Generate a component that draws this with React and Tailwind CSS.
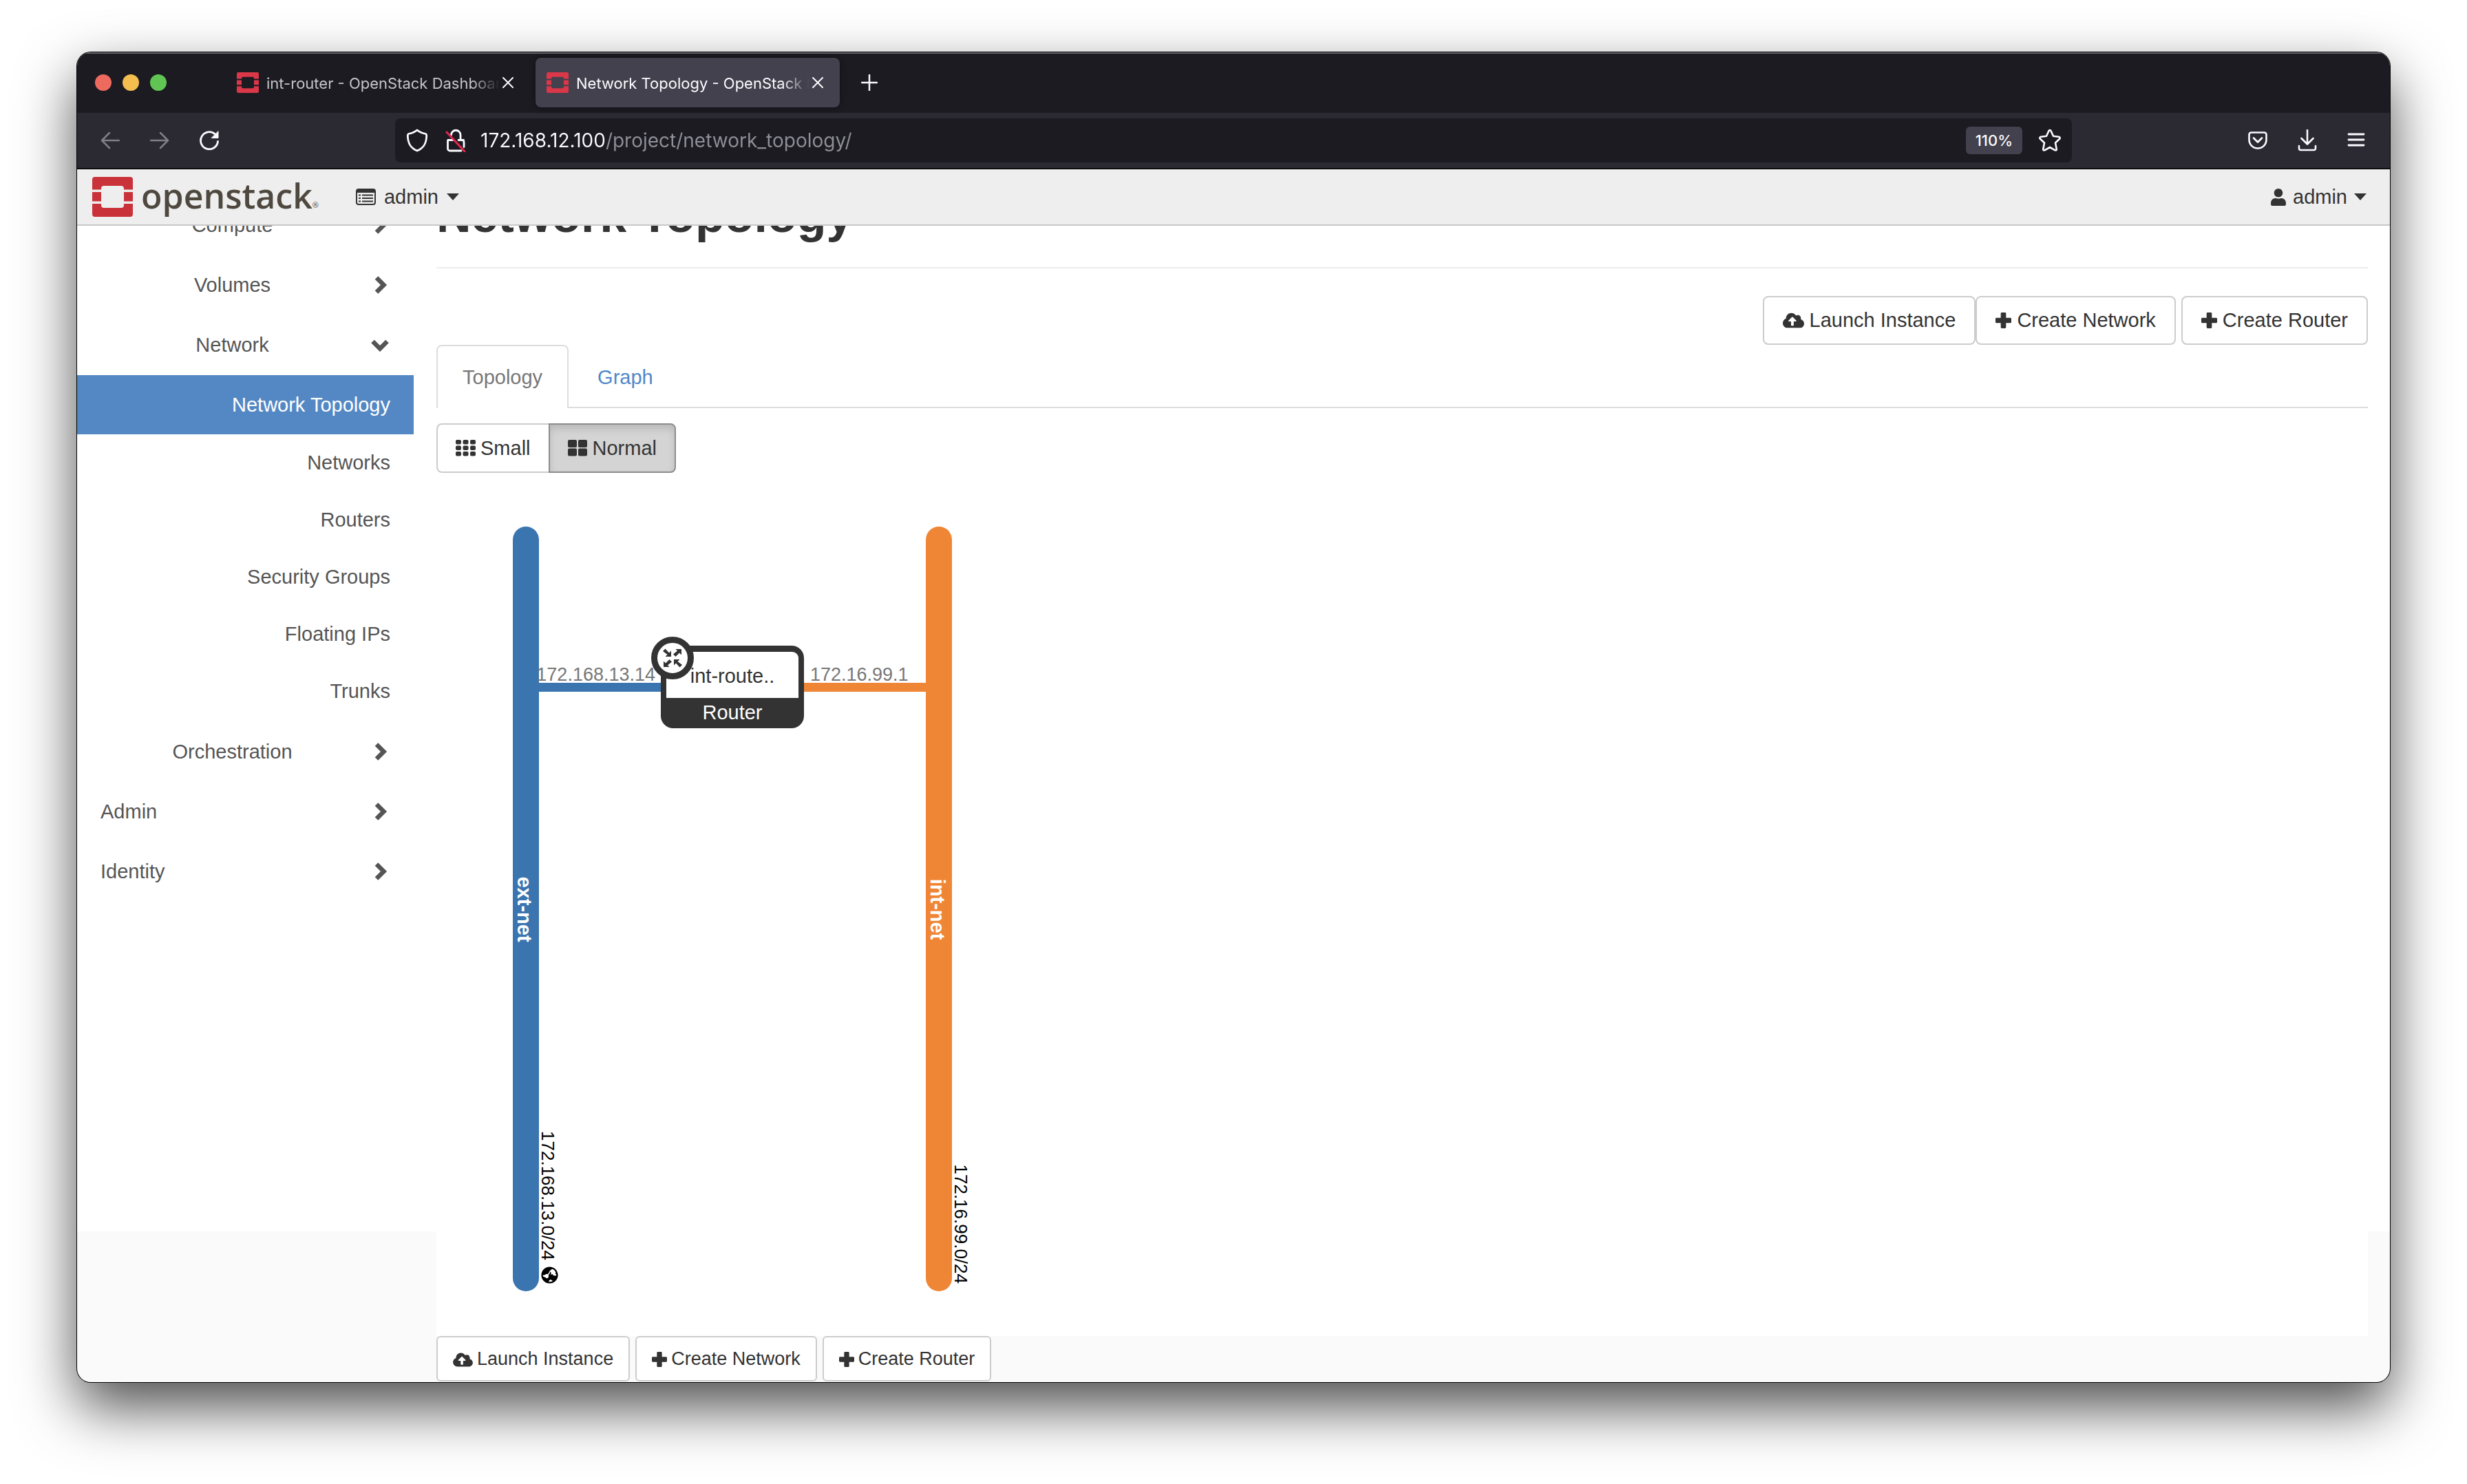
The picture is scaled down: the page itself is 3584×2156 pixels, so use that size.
import { FaCloudUploadAlt, FaUser, FaGlobeAmericas } from "react-icons/fa";

const StackMark = ({ className }) => (
  <svg viewBox="0 0 59 58" preserveAspectRatio="none" fill="currentColor" className={className} aria-hidden="true">
    <path d="M4 0h51a4 4 0 0 1 4 4v14.500H46V17a4 4 0 0 0-4-4H17a4 4 0 0 0-4 4v1.500H0V4a4 4 0 0 1 4-4z" />
    <path d="M0 22h13v13.500H0zM46 22h13v13.500H46z" />
    <path d="M0 39h13v2a4 4 0 0 0 4 4h25a4 4 0 0 0 4-4v-2h13v15a4 4 0 0 1-4 4H4a4 4 0 0 1-4-4z" />
  </svg>
);

const CloseIcon = () => (
  <svg viewBox="0 0 16 16" className="size-4" stroke="currentColor" strokeWidth="2" strokeLinecap="round" aria-hidden="true">
    <path d="M1 1l14 14M15 1L1 15" />
  </svg>
);

const Stroke = ({ className, viewBox, children }) => (
  <svg viewBox={viewBox} className={className} fill="none" stroke="currentColor" strokeWidth="3" strokeLinecap="round" strokeLinejoin="round" aria-hidden="true">
    {children}
  </svg>
);

const Caret = () => (
  <svg viewBox="0 0 18 10" className="h-[10px] w-[18px]" fill="currentColor" aria-hidden="true">
    <path d="M0 0h18L9 10z" />
  </svg>
);

const PlusIcon = ({ className }) => (
  <svg viewBox="0 0 24 24" className={className} fill="currentColor" aria-hidden="true">
    <path d="M9.500 0h5a1.500 1.500 0 0 1 1.500 1.500V8h6.500A1.500 1.500 0 0 1 24 9.500v5a1.500 1.500 0 0 1-1.500 1.500H16v6.500a1.500 1.500 0 0 1-1.500 1.500h-5A1.500 1.500 0 0 1 8 22.500V16H1.500A1.500 1.500 0 0 1 0 14.500v-5A1.500 1.500 0 0 1 1.500 8H8V1.500A1.500 1.500 0 0 1 9.500 0z" />
  </svg>
);

const GridIcon = ({ cells }) => {
  const pitch = cells === 3 ? 10.5 : 15;
  const w = cells === 3 ? 8 : 13;
  const ph = cells === 3 ? 8.5 : 12.5;
  const h = cells === 3 ? 6.5 : 11;
  const items = [];
  for (let r = 0; r < cells; r++)
    for (let c = 0; c < cells; c++)
      items.push(<rect key={`${r}-${c}`} x={c * pitch} y={r * ph} width={w} height={h} rx="2" />);
  return (
    <svg viewBox="0 0 29 24" className="h-6 w-[29px]" fill="currentColor" aria-hidden="true">
      {items}
    </svg>
  );
};

const Chevron = ({ open }) => (
  <svg viewBox="0 0 28 28" className="size-7" fill="none" stroke="currentColor" strokeWidth="6.500" aria-hidden="true">
    {open ? <path d="M2.500 8L13 18.500 23.500 8" /> : <path d="M8 2.500L18.500 13 8 23.500" />}
  </svg>
);

function BrowserTab({ title, active }) {
  return (
    <div
      className={
        "flex h-[72px] w-[442px] items-center rounded-lg pl-4 pr-6 " +
        (active ? "bg-[#42414d] text-[#fbfbfe] shadow-[0_0_8px_rgba(0,0,0,0.5)]" : "text-[#c4c4c8]")
      }
    >
      <StackMark className="h-[30px] w-8 shrink-0 text-[#da3749]" />
      <button
        role="tab"
        aria-selected={!!active}
        className="ml-[11px] min-w-0 flex-1 overflow-hidden whitespace-nowrap pt-0.5 text-left text-[22px] leading-8 [mask-image:linear-gradient(to_right,#000_88%,transparent)]"
      >
        {title}
      </button>
      <button aria-label={`Close ${title}`} className="ml-1 text-[#fbfbfe]">
        <CloseIcon />
      </button>
    </div>
  );
}

function BrowserChrome() {
  return (
    <div className="font-[Inter,sans-serif]">
      <div className="flex h-[88px] items-center bg-[#1c1b22] px-[26px] shadow-[inset_0_2px_0_#66666b]">
        <div className="flex w-[190px] gap-4">
          <button aria-label="Close window" className="size-6 rounded-full bg-[#ed6a5e]" />
          <button aria-label="Minimize window" className="size-6 rounded-full bg-[#f5bf4f]" />
          <button aria-label="Zoom window" className="size-6 rounded-full bg-[#61c554]" />
        </div>
        <div role="tablist" className="flex gap-2">
          <BrowserTab title="int-router - OpenStack Dashboard" />
          <BrowserTab title="Network Topology - OpenStack Dashboard" active />
        </div>
        <button aria-label="New tab" className="ml-[31px] text-[#fbfbfe]">
          <Stroke viewBox="0 0 24 24" className="size-6">
            <path d="M12 1v22M1 12h22" strokeWidth="2.500" />
          </Stroke>
        </button>
      </div>

      <div className="flex h-[82px] items-center border-b-2 border-[#0c0c0d] bg-[#2b2a33] pl-[34px] pr-9 text-[#fbfbfe]">
        <div className="flex w-[428px] gap-11">
          <button aria-label="Back" className="text-[#807f86]">
            <Stroke viewBox="0 0 28 28" className="size-7">
              <path d="M27 14H2M13 3L2 14l11 11" strokeWidth="2.500" />
            </Stroke>
          </button>
          <button aria-label="Forward" className="text-[#807f86]">
            <Stroke viewBox="0 0 28 28" className="size-7">
              <path d="M1 14h25M15 3l11 11-11 11" strokeWidth="2.500" />
            </Stroke>
          </button>
          <button aria-label="Reload">
            <Stroke viewBox="0 0 28 28" className="size-7">
              <path d="M26.500 15.500A12.500 12.500 0 1 1 22.500 5" strokeWidth="2.800" />
              <path d="M27 1v9.500h-9.500z" fill="currentColor" strokeWidth="1" />
            </Stroke>
          </button>
        </div>

        <div className="flex h-16 min-w-0 max-w-[2436px] flex-1 items-center rounded-lg bg-[#1c1b22] pl-4 pr-4">
          <button aria-label="Tracking protection">
            <Stroke viewBox="0 0 32 34" className="h-[34px] w-8">
              <path d="M16 2C12 5.500 8 6.500 3.500 7.500 2.500 8 2.300 8.500 2.300 10 2.500 21 6 28 16 32c10-4 13.500-11 13.700-22 0-1.500-.2-2-1.200-2.500C24 6.500 20 5.500 16 2z" strokeWidth="2.800" />
            </Stroke>
          </button>
          <button aria-label="Connection is not secure" className="ml-6">
            <Stroke viewBox="0 0 32 34" className="h-[34px] w-8">
              <path d="M9.500 9A6.700 6.700 0 0 1 23 9v7M26 16.500h1.500M5 16.500h7M4.500 17v12a3 3 0 0 0 3 3H24" strokeWidth="2.800" />
              <path d="M20 16.500h5a3 3 0 0 1 3 3v7" strokeWidth="2.800" />
              <path d="M3 5l26 28" stroke="#e22850" strokeWidth="3" />
            </Stroke>
          </button>
          <input
            aria-label="Address"
            defaultValue="172.168.12.100/project/network_topology/"
            className="ml-5 min-w-0 flex-1 bg-[linear-gradient(to_right,#fbfbfe_182px,#8f8f98_182px)] bg-clip-text text-[28px] leading-9 text-transparent outline-none"
          />
          <button className="h-10 rounded-md bg-[#42414d] px-[14px] text-[22px] font-medium leading-10">110%</button>
          <button aria-label="Bookmark this page" className="ml-6">
            <Stroke viewBox="0 0 32 34" className="h-[34px] w-8">
              <path d="M16 2c.8 0 1.300.6 1.600 1.300l3.400 7.500 8 1c1.700.3 2.200 1.700 1 3l-6 5.700 1.700 9c.2 1.700-.9 2.500-2.400 1.700L16 27l-7.300 4.200c-1.500.8-2.600 0-2.400-1.700l1.700-9-6-5.700c-1.200-1.300-.7-2.700 1-3l8-1 3.400-7.500C14.700 2.600 15.200 2 16 2z" strokeWidth="2.600" />
            </Stroke>
          </button>
        </div>

        <div className="ml-auto flex items-center gap-11">
          <button aria-label="Save to Pocket">
            <Stroke viewBox="0 0 28 28" className="size-7">
              <path d="M4.500 2.500h19a3 3 0 0 1 3 3V13a12.500 12.500 0 0 1-25 0V5.500a3 3 0 0 1 3-3z" strokeWidth="2.600" />
              <path d="M8 10.500l6 6 6-6" strokeWidth="2.800" />
            </Stroke>
          </button>
          <button aria-label="Downloads">
            <Stroke viewBox="0 0 28 32" className="h-8 w-7">
              <path d="M14 1v20M5.500 13l8.500 8.500 8.500-8.500M2 24v3.500A2.500 2.500 0 0 0 4.500 30h19a2.500 2.500 0 0 0 2.500-2.500V24" strokeWidth="2.600" />
            </Stroke>
          </button>
          <button aria-label="Menu">
            <Stroke viewBox="0 0 26 26" className="size-[26px]">
              <path d="M2 4h22M2 12h22M2 20h22" strokeWidth="2.800" />
            </Stroke>
          </button>
        </div>
      </div>
    </div>
  );
}

function Navbar() {
  return (
    <header className="relative z-10 flex h-[82px] items-center border-b-2 border-[#c8c8c8] bg-[#eee] pl-[22px] pr-[34px]">
      <a href="#home" aria-label="openstack" className="flex items-center">
        <StackMark className="h-[58px] w-[59px] text-[#c93239]" />
        <span className="mb-1 ml-3 font-['Open_Sans',sans-serif] text-[50px] font-semibold leading-[72px] text-[#4e483f]">openstack</span>
        <span className="mt-6 font-['Open_Sans',sans-serif] text-[11px] text-[#4e483f]">®</span>
      </a>
      <button className="ml-[54px] flex items-center gap-3">
        <svg viewBox="0 0 29 24" className="h-6 w-[29px]" fill="none" stroke="currentColor" aria-hidden="true">
          <rect x="1" y="1" width="27" height="22" rx="3" strokeWidth="2" />
          <path d="M1 3.500h27" strokeWidth="5" />
          <path d="M4 9.500h3M4 14h3M4 18.500h3M9 9.500h16M9 14h16M9 18.500h16" strokeWidth="2" />
        </svg>
        <span>admin</span>
        <Caret />
      </button>
      <button className="ml-auto flex items-center gap-[10px]">
        <FaUser className="h-[25px] w-[22px]" />
        <span>admin</span>
        <Caret />
      </button>
    </header>
  );
}

function Category({ label, open }) {
  return (
    <button aria-expanded={!!open} className="flex h-[87px] w-full items-center px-[34px]">
      <span className="flex-1 text-center">{label}</span>
      <span className="flex w-[38px] justify-end">
        <Chevron open={open} />
      </span>
    </button>
  );
}

function Section({ label }) {
  return (
    <button aria-expanded="false" className="flex h-[87px] w-full items-center justify-between px-[34px]">
      <span>{label}</span>
      <Chevron />
    </button>
  );
}

const panels = ["Networks", "Routers", "Security Groups", "Floating IPs", "Trunks"];

function Sidebar() {
  return (
    <aside className="bg-white pb-[479px] pr-[33px] text-[#555]">
      <nav className="-mt-11">
        <Category label="Compute" />
        <Category label="Volumes" />
        <Category label="Network" open />
        <ul className="pb-[3px] text-right">
          <li>
            <a href="#topology" aria-current="page" className="block h-[86px] bg-[#5488c4] px-[34px] leading-[86px] text-white">
              Network Topology
            </a>
          </li>
          {panels.map((p) => (
            <li key={p}>
              <a href="#panel" className="block h-[83px] px-[34px] leading-[83px]">{p}</a>
            </li>
          ))}
        </ul>
        <Category label="Orchestration" />
        <Section label="Admin" />
        <Section label="Identity" />
      </nav>
    </aside>
  );
}

function Actions({ small }) {
  const cls = small
    ? "flex h-[66px] items-center gap-[6px] rounded-md border-2 border-[#ccc] bg-white px-[22px] pt-0.5 text-[27px]"
    : "flex h-[71px] items-center gap-2 rounded-lg border-2 border-[#ccc] bg-white px-[27px]";
  const plus = small ? "size-[22px]" : "size-[23px]";
  return (
    <>
      <button className={cls}>
        <FaCloudUploadAlt className={small ? "h-[23px] w-[29px]" : "h-[25px] w-[31px]"} />
        Launch Instance
      </button>
      <button className={small ? cls : cls + " mr-2"}>
        <PlusIcon className={plus} />
        Create Network
      </button>
      <button className={cls}>
        <PlusIcon className={plus} />
        Create Router
      </button>
    </>
  );
}

function TopologyDiagram() {
  return (
    <svg viewBox="0 0 900 1254" className="block h-[1254px] w-[900px]" role="img" aria-label="Network topology">
      <rect x="111" y="78" width="38" height="1111" rx="19" fill="#3b75af" />
      <rect x="711" y="78" width="38" height="1111" rx="19" fill="#ef8636" />
      <rect x="148" y="305" width="180" height="13" fill="#3b75af" />
      <rect x="532" y="305" width="180" height="13" fill="#ef8636" />
      <g fontSize="27" fill="#777">
        <text x="318" y="302" textAnchor="end">172.168.13.14</text>
        <text x="543" y="302">172.16.99.1</text>
      </g>

      <rect x="326" y="251" width="208" height="120" rx="18" fill="#333" />
      <path d="M334 327v-58a9 9 0 0 1 9-9h174a9 9 0 0 1 9 9v58z" fill="#fff" />
      <circle cx="343" cy="269" r="26.500" fill="#fff" stroke="#333" strokeWidth="9" />
      <g fill="#333" transform="translate(343 269)">
        <path id="inward" d="M-2-2V-10.500L-5-7.500L-10.500-13.500L-14-10L-7.500-5L-10.500-2z" />
        <path d="M2 2V10.500L5 7.500L10.500 13.500L14 10L7.500 5L10.500 2z" />
        <path d="M13-13V-4.500L10-7.500L4.500-2L1-5.500L7-10.500L4.500-13z" />
        <path d="M-13 13V4.500L-10 7.500L-4.500 2L-1 5.500L-7 10.500L-4.500 13z" />
      </g>
      <g fontSize="29" textAnchor="middle">
        <text x="430" y="305" fill="#333">int-route..</text>
        <text x="430" y="358" fill="#fff">Router</text>
      </g>

      <g fontSize="29" fontWeight="700" fill="#fff" textAnchor="middle">
        <text transform="translate(118 634) rotate(90)">ext-net</text>
        <text transform="translate(718 634) rotate(90)">int-net</text>
      </g>
      <g fontSize="26" fill="#000" textAnchor="end">
        <text transform="translate(153 1144) rotate(90)">172.168.13.0/24</text>
        <text transform="translate(753 1178) rotate(90)">172.16.99.0/24</text>
      </g>
      <g transform="translate(177 1153) rotate(90)">
        <FaGlobeAmericas size={25} color="#000" />
      </g>
    </svg>
  );
}

function Main() {
  return (
    <main className="row-span-2">
      <div className="bg-white">
        <h1 className="-mt-[53px] border-b-2 border-[#eee] pb-[37px] text-[70px] font-bold leading-[76px]">Network Topology</h1>
        <div className="flex justify-end pt-10">
          <Actions />
        </div>
        <div role="tablist" className="flex h-[92px] border-b-2 border-[#ddd]">
          <button role="tab" aria-selected="true" className="-mb-0.5 rounded-t-lg border-2 border-b-0 border-[#ddd] bg-white px-9 text-[#777]">
            Topology
          </button>
          <button role="tab" aria-selected="false" className="-mb-0.5 ml-1 border-2 border-b-0 border-transparent px-9 text-[#5088c8]">
            Graph
          </button>
        </div>
        <div className="mt-[22px] flex h-[72px]">
          <button className="flex items-center gap-[7px] rounded-l-lg border-2 border-r-0 border-[#ccc] bg-white px-[26px]">
            <GridIcon cells={3} />
            Small
          </button>
          <button aria-pressed="true" className="flex items-center gap-[7px] rounded-r-lg border-2 border-[#8c8c8c] bg-[#d4d4d4] px-[26px] shadow-[inset_0_6px_11px_rgba(0,0,0,0.125)]">
            <GridIcon cells={2} />
            Normal
          </button>
        </div>
        <TopologyDiagram />
      </div>
      <div className="flex gap-2">
        <Actions small />
      </div>
    </main>
  );
}

export default function App() {
  return (
    <div className="flex min-h-screen flex-col bg-white px-28 pb-[148px] pt-[76px]">
      <div className="flex flex-1 flex-col overflow-hidden rounded-[20px] bg-[#fafafa] font-['Liberation_Sans',Arial,sans-serif] text-[29px] leading-[1.4] text-[#333] shadow-[0_0_0_1px_#000,0_36px_84px_rgba(0,0,0,0.7)]">
        <BrowserChrome />
        <Navbar />
        <div className="grid flex-1 grid-cols-[522px_1fr_32px] grid-rows-[auto_1fr] overflow-hidden">
          <Sidebar />
          <Main />
          <div className="bg-white" />
        </div>
      </div>
    </div>
  );
}
